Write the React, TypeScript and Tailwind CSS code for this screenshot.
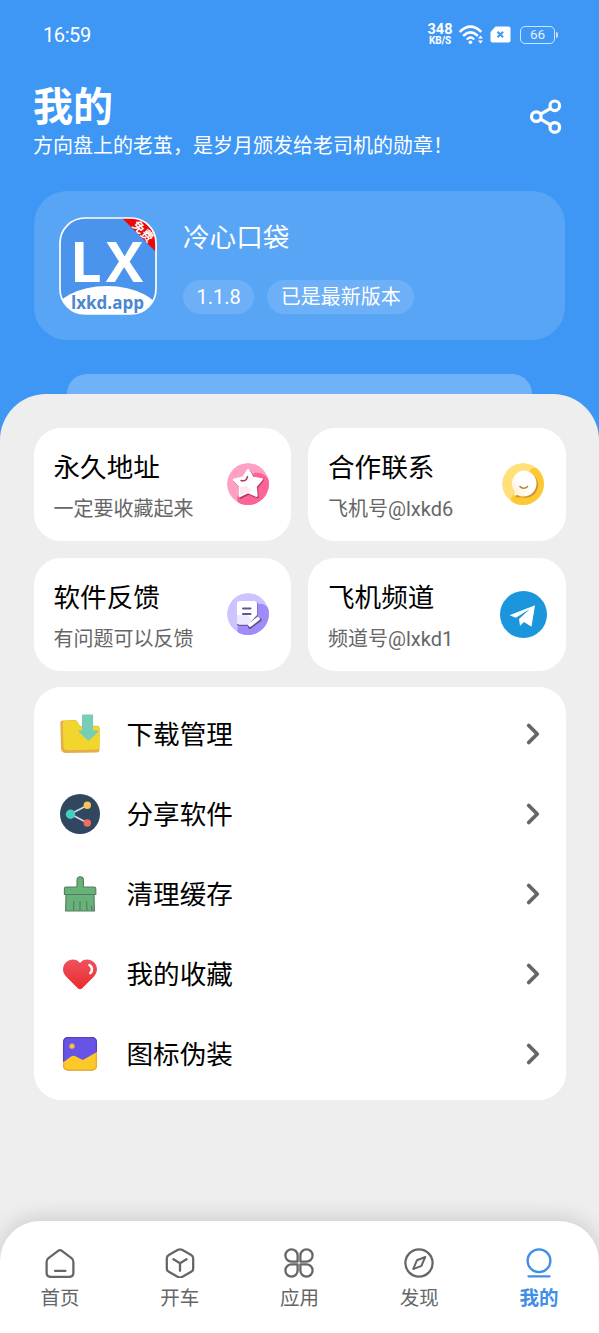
import React from 'react';
import { ChevronRight } from 'lucide-react';

/* ---------- status bar ---------- */

function StatusBar() {
  return (
    <div className="flex h-[69px] items-center justify-between pl-[43px] pr-[41px] text-white">
      <span className="text-[20px] font-normal leading-6 tracking-[-0.4px]">16:59</span>
      <div className="flex items-center">
        <div className="flex w-[26px] flex-col items-center font-bold leading-none">
          <span className="text-[14.5px] leading-[12px]">348</span>
          <span className="text-[10px] leading-[9px] tracking-[-0.2px]">KB/S</span>
        </div>
        <svg className="ml-[6px]" width="25" height="22" viewBox="0 0 25 22" fill="none">
          <path d="M1.500 7.200Q11.500-1.800 21.500 7.200M5 11.200q6.500-5.600 13 0" stroke="white" strokeWidth="2.600" strokeLinecap="round" />
          <path d="M8.400 14.800q3.200-2.600 6.200 0" stroke="white" strokeWidth="2.300" strokeLinecap="round" />
          <circle cx="11.400" cy="18.300" r="1.800" fill="white" />
          <path d="M19 14.600l2.500-3 2.500 3zM19 16.600l2.500 3 2.500-3z" fill="white" />
        </svg>
        <svg className="mb-px ml-[6px]" width="21" height="17" viewBox="0 0 21 17" fill="none">
          <path d="M5.500.5H18.500a2 2 0 012 2v12a2 2 0 01-2 2H2.500a2 2 0 01-2-2V6z" fill="white" />
          <path d="M7.500 5.800l5.600 5.400M13.100 5.800l-5.600 5.400" stroke="#3e97f5" strokeWidth="2" />
        </svg>
        <div className="ml-[9px] flex h-[18px] w-[35px] items-center justify-center rounded-[5px] border-[1.5px] border-white/75">
          <span className="text-[13.5px] leading-none text-white/85">66</span>
        </div>
        <div className="ml-px h-[6px] w-[2px] rounded-r bg-white/70" />
      </div>
    </div>
  );
}

/* ---------- app logo ---------- */

function AppLogo() {
  return (
    <svg width="98" height="98" viewBox="0 0 98 98" className="shrink-0">
      <defs>
        <clipPath id="logoClip">
          <rect x="1" y="1" width="96" height="96" rx="25" />
        </clipPath>
      </defs>
      <g clipPath="url(#logoClip)">
        <rect width="98" height="98" fill="#4a94ee" />
        <path d="M63 1h35v35z" fill="#ec0808" />
        <ellipse cx="48" cy="98" rx="53" ry="29" fill="white" />
      </g>
      <rect x="1" y="1" width="96" height="96" rx="25" fill="none" stroke="white" strokeWidth="1.700" />
      <text x="11" y="65" fill="white" fontFamily="Open Sans" fontWeight="700" fontSize="56" textLength="73">LX</text>
      <text x="48.500" y="91.500" textAnchor="middle" fill="#4a86d2" fontFamily="Open Sans, Noto Sans" fontWeight="700" fontSize="17.500" textLength="73" lengthAdjust="spacingAndGlyphs">lxkd.app</text>
      <text transform="translate(72.500 9) rotate(45)" fill="white" fontFamily="Noto Sans CJK SC" fontWeight="700" fontSize="12">免费</text>
    </svg>
  );
}

/* ---------- card icons ---------- */

function StarIcon() {
  return (
    <svg width="42" height="42" viewBox="0 0 42 42">
      <defs>
        <clipPath id="roundClip">
          <circle cx="21" cy="21" r="21" />
        </clipPath>
      </defs>
      <g clipPath="url(#roundClip)">
        <circle cx="21" cy="21" r="21" fill="#fda0c4" />
        <path d="M27 10c8-1 13 3 15.700 8v24H12c-4-6-1-11 3-15z" fill="#fb6495" />
      </g>
      <path d="M22 7.500l4.500 8 9.200 1.700-6 7.200.8 9.800-8.300-3.700-8.500 4.200.8-9.700-6.300-6.800 9-2.200z" fill="#b83c6c" stroke="#b83c6c" strokeWidth="2.500" strokeLinejoin="round" />
      <path d="M21.300 7l4.200 7.800 9.200 1.700-6.200 6.800.9 9.400-8.400-3.800-8.200 4.100.6-9.500-6.200-6.800 9-2z" fill="#fff" stroke="#fff" strokeWidth="2.500" strokeLinejoin="round" />
      <path d="M13 24l7-1 5 5-4 1-8 3z" fill="#fde7f0" />
      <path d="M14 17.500c3 1 5.500 0 6.500-3.800" fill="none" stroke="#a83a63" strokeWidth="1.500" strokeLinecap="round" />
    </svg>
  );
}

function ChatIcon() {
  return (
    <svg width="42" height="42" viewBox="0 0 42 42">
      <defs>
        <linearGradient id="chatFill" x1="0" y1="1" x2="1" y2="0">
          <stop offset="0" stopColor="#ffeccb" />
          <stop offset=".45" stopColor="#fff" />
        </linearGradient>
      </defs>
      <g clipPath="url(#roundClip)">
        <circle cx="21" cy="21" r="21" fill="#ffe07a" />
        <path d="M30 5l12 0v37H9l0-7z" fill="#fcc934" />
      </g>
      <path d="M23.500 9.500a12.600 12.600 0 11-3.500 24.700l-6.500.3 2-5A13 13 0 0123.500 9.500z" fill="#cf9526" />
      <path d="M21.500 7.500a13 13 0 110 26c-3 0-4.500-.6-6.500-1.500l-3 .8.600-4.600A13 13 0 0121.500 7.500z" fill="url(#chatFill)" />
      <path d="M18 23.500c1.800 2.400 5.500 2.400 7.500 0" fill="none" stroke="#b48432" strokeWidth="1.600" strokeLinecap="round" />
    </svg>
  );
}

function NoteIcon() {
  return (
    <svg width="42" height="42" viewBox="0 0 42 42">
      <g clipPath="url(#roundClip)">
        <circle cx="21" cy="21" r="21" fill="#cdc3ff" />
        <path d="M30 11c6-1 9 1 12 5v26H11C9 34 12 28 18 26z" fill="#9f8cf8" />
      </g>
      <path d="M12 9.500h18.500V23L21 33H12c-1.200 0-2-.8-2-2z" fill="#6b579e" />
      <path d="M12.500 8h15A2.500 2.500 0 0130 10.500V22l-8.500 9.500h-9A2.500 2.500 0 0110 29V10.500A2.500 2.500 0 0112.500 8z" fill="#fff" />
      <path d="M10 22h10l5 5-3.500 4.500h-9A2.500 2.500 0 0110 29z" fill="#ece8ff" />
      <path d="M16 15.500h7.500M16 21h7.500" stroke="#635297" strokeWidth="2" strokeLinecap="round" />
      <path d="M23 33.800l9.500-7" stroke="#655194" strokeWidth="4" strokeLinecap="round" />
      <path d="M23 32l8-6.200" stroke="#fff" strokeWidth="3.600" strokeLinecap="round" />
    </svg>
  );
}

function TelegramIcon() {
  return (
    <svg width="47" height="47" viewBox="0 0 47 47">
      <circle cx="23.500" cy="23.500" r="23.500" fill="#1b96dc" />
      <path d="M9.500 24.300L35 14.200l-3.500 21.500-7.500-4.700-4 3.800-1-6.800L30 18l-14.200 8.700z" fill="#fff" />
    </svg>
  );
}

/* ---------- list icons ---------- */

function DownloadIcon() {
  return (
    <svg width="40" height="40" viewBox="0 0 40 40">
      <path d="M.3 9Q.3 6.600 2.500 6.500L15 6q2 0 3 2.500l2 3.500 17-.2q2.700 0 2.700 3L39.500 36q-.2 2.500-3 2.500L6 39q-4 0-5-4z" fill="#e6ad4b" />
      <path d="M2.800 9.500q0-2.600 2.500-2.700L15 6.500q2 0 3 2.500l2 3.500 17-.2q2.500 0 2.500 2.500v18q0 2.500-2.800 2.800L7 36.300q-3 0-3.500-3.500z" fill="#f2d52d" />
      <path d="M23 .5h9.200a.9.900 0 01.9.900V16.500h4.300c1 0 1.300.7.600 1.400l-8.700 8.300q-.8.800-1.600 0l-8.700-8.300c-.8-.8-.5-1.400.5-1.400H22V1.400q0-.9 1-.9z" fill="#77cdb5" />
    </svg>
  );
}

function ShareAppIcon() {
  return (
    <svg width="40" height="40" viewBox="0 0 40 40">
      <circle cx="20" cy="20" r="20" fill="#31475f" />
      <path d="M27.500 11.200L10.500 20l17 9" fill="none" stroke="#d5d8e4" strokeWidth="1.700" />
      <circle cx="10.500" cy="20.200" r="4.700" fill="#42d0c3" />
      <circle cx="27.300" cy="11.200" r="3.700" fill="#fbc25a" />
      <circle cx="27.300" cy="29" r="3.700" fill="#f36c5c" />
    </svg>
  );
}

function BrushIcon() {
  return (
    <svg width="40" height="40" viewBox="0 0 40 40" fill="#67b278" stroke="#577a60" strokeWidth="1.100" strokeLinejoin="round">
      <path d="M6 20.500h28l.4 16.500H5.600z" />
      <path d="M6 13h10.500q.5 0 .5-.7V6a3.200 3.200 0 016.400 0v6.300q0 .7.600.7h10q1.800 0 1.800 1.800v5.700H4.400v-5.700Q4.400 13 6 13z" />
      <path d="M13.500 36l.5-8.500M20 36v-8.500M27 36l-.5-8.500M32 36l-.5-4" fill="none" strokeLinecap="round" />
    </svg>
  );
}

function HeartIcon() {
  return (
    <svg width="40" height="40" viewBox="0 0 40 40">
      <defs>
        <linearGradient id="heartFill" x1="0" y1="0" x2="0" y2="1">
          <stop offset="0" stopColor="#ef5261" />
          <stop offset="1" stopColor="#ea2b2b" />
        </linearGradient>
      </defs>
      <path d="M20 9c3-4 9-4.600 13-1.400 5 3.800 5.200 10.500 1 14.800L22.200 34.200q-2.200 2-4.400 0L6 22.400C1.800 18.100 2 11.400 7 7.600 11 4.400 17 5 20 9z" fill="url(#heartFill)" />
      <path d="M29.500 11.200c3 1.500 3.300 5.500.8 8" fill="none" stroke="#fff" strokeWidth="2.600" strokeLinecap="round" />
    </svg>
  );
}

function PictureIcon() {
  return (
    <svg width="40" height="40" viewBox="0 0 40 40">
      <defs>
        <clipPath id="pictureClip">
          <rect x="3" y="3" width="34" height="33.500" rx="5" />
        </clipPath>
      </defs>
      <g clipPath="url(#pictureClip)">
        <path d="M0 0h40v40H0z" fill="#6754e6" />
        <path d="M3 28.500l8-6q2.500-1.700 5 0l5 2.800q2 1 4-.5L37 18v20H3z" fill="#fcc928" />
      </g>
      <path d="M3.600 27V8.500Q3.600 3.600 8.500 3.600h23q4.900 0 4.900 4.900V18" fill="none" stroke="#5943ba" strokeWidth="1.300" />
      <path d="M3.600 29v2.500q0 4.400 4.900 4.400h23q4.900 0 4.900-4.400V19" fill="none" stroke="#eeab2b" strokeWidth="1.300" />
      <circle cx="12" cy="12.200" r="2.600" fill="#f6c646" stroke="#c18a62" strokeWidth=".8" />
    </svg>
  );
}

/* ---------- data ---------- */

const cards = [
  { title: '永久地址', text: '一定要收藏起来', icon: <StarIcon />, pad: 'pr-[22px]' },
  { title: '合作联系', text: '飞机号@lxkd6', icon: <ChatIcon />, pad: 'pr-[22px]' },
  { title: '软件反馈', text: '有问题可以反馈', icon: <NoteIcon />, pad: 'pr-[22px]' },
  { title: '飞机频道', text: '频道号@lxkd1', icon: <TelegramIcon />, pad: 'pr-[19px]' },
];

const menu = [
  { label: '下载管理', icon: <DownloadIcon /> },
  { label: '分享软件', icon: <ShareAppIcon /> },
  { label: '清理缓存', icon: <BrushIcon /> },
  { label: '我的收藏', icon: <HeartIcon /> },
  { label: '图标伪装', icon: <PictureIcon /> },
];

const tabs = [
  {
    label: '首页',
    icon: <path d="M3.500 10.200l9.600-7.300q1.900-1.400 3.800 0l9.600 7.300q1.900 1.500 1.900 3.800v10.500q0 4.400-4.400 4.400H6q-4.400 0-4.400-4.400V14q0-2.300 1.900-3.800zM10 22.800h10.500" />,
  },
  {
    label: '开车',
    icon: <path d="M13 1.800q2-1 4 0l9.200 5.200q2 1.100 2 3.400v10q0 2.300-2 3.400L17 28.900q-2 1.100-4 0l-9.200-5.100q-2-1.100-2-3.400v-10q0-2.300 2-3.400zM8.500 11.200l6.500 4 6.500-4M15 15.200v7.600" />,
  },
  {
    label: '应用',
    icon: <path d="M13.600 13.600H7.500a6.100 6.100 0 116.100-6.100zM16.400 13.600h6.100a6.100 6.100 0 10-6.100-6.100zM13.600 16.400H7.500a6.100 6.100 0 106.100 6.100zM16.400 16.400h6.100a6.100 6.100 0 11-6.100 6.100z" />,
  },
  {
    label: '发现',
    icon: (
      <>
        <circle cx="15" cy="15" r="13.600" />
        <path d="M21.200 9l-8.200 3.200-3.800 8.900 8.200-3.200z" strokeWidth="2" />
      </>
    ),
  },
  {
    label: '我的',
    active: true,
    icon: (
      <>
        <circle cx="15" cy="12.700" r="11.400" />
        <path d="M4.500 28.300h21" />
      </>
    ),
  },
];

/* ---------- page ---------- */

export default function App() {
  return (
    <div className="flex h-[1333px] w-[599px] flex-col overflow-hidden bg-[#3e97f5] font-['Roboto','Noto_Sans_CJK_SC',sans-serif]">
      <StatusBar />

      {/* Title */}
      <header className="flex h-[122px] items-start justify-between pl-[33px] pr-[36px] text-white">
        <div className="pt-[15px]">
          <h1 className="text-[40px] font-bold leading-[48px]">我的</h1>
          <p className="-mt-px text-[20px] leading-[30px]">方向盘上的老茧，是岁月颁发给老司机的勋章！</p>
        </div>
        <svg className="mt-[30px] shrink-0" width="34" height="36" viewBox="0 0 34 36" fill="none" stroke="white" strokeWidth="3.200">
          <circle cx="7.300" cy="17.600" r="4.800" />
          <circle cx="25.800" cy="6.800" r="4.800" />
          <circle cx="25.800" cy="28.400" r="4.800" />
          <path d="M11.600 15.200l10-5.900M11.600 20.200l10 5.800" />
        </svg>
      </header>

      {/* App info */}
      <section className="mx-[34px] flex h-[149px] shrink-0 gap-[26px] rounded-[33px] bg-[#58a5f6] pl-[25px] pt-[26px] text-white">
        <AppLogo />
        <div className="flex flex-col">
          <h2 className="mt-[3px] text-[26.6px] leading-9">冷心口袋</h2>
          <div className="mt-6 flex gap-[13px] text-[20px] leading-[35px]">
            <span className="h-[34px] rounded-full bg-[#6db0f7] px-[13.5px]">1.1.8</span>
            <span className="h-[34px] rounded-full bg-[#6db0f7] px-[13.5px]">已是最新版本</span>
          </div>
        </div>
      </section>

      <div className="mx-[67px] mt-[34px] h-5 shrink-0 rounded-t-[20px] bg-[#70b2f8]" />

      {/* Content sheet */}
      <main className="flex flex-1 flex-col rounded-t-[46px] bg-[#eee]">
        <div className="flex-1 px-[33.5px] pt-[33.5px]">
          <div className="grid grid-cols-2 gap-x-[17px] gap-y-[17px]">
            {cards.map((card) => (
              <div key={card.title} className={`flex h-[113px] items-center justify-between rounded-[27px] bg-white pl-5 ${card.pad}`}>
                <div className="pt-[3px]">
                  <h3 className="text-[26.6px] leading-10 text-black">{card.title}</h3>
                  <p className="mt-[6px] text-[20px] leading-[30px] text-[#666]">{card.text}</p>
                </div>
                {card.icon}
              </div>
            ))}
          </div>

          <ul className="mt-[16.5px] rounded-[27px] bg-white py-[6.5px]">
            {menu.map((item) => (
              <li key={item.label} className="flex h-20 items-center pl-[26px] pr-4">
                {item.icon}
                <span className="ml-[27px] flex-1 pt-[3px] text-[26.6px] leading-10 text-black">{item.label}</span>
                <ChevronRight size={34} strokeWidth={2.7} color="#666" />
              </li>
            ))}
          </ul>
        </div>

        {/* Bottom tabs */}
        <nav className="grid h-[112px] grid-cols-5 rounded-t-[40px] bg-white pt-[27px] shadow-[0_-2px_22px_rgba(0,0,0,0.16)]">
          {tabs.map((tab) => (
            <div key={tab.label} className={`flex flex-col items-center ${tab.active ? 'font-bold text-[#3f8ee8]' : 'text-[#666]'}`}>
              <svg width="30" height="30" viewBox="0 0 30 30" fill="none" stroke="currentColor" strokeWidth="2.300" strokeLinecap="round" strokeLinejoin="round">
                {tab.icon}
              </svg>
              <span className="mt-[6px] text-[19.5px] leading-[30px]">{tab.label}</span>
            </div>
          ))}
        </nav>
      </main>
    </div>
  );
}
